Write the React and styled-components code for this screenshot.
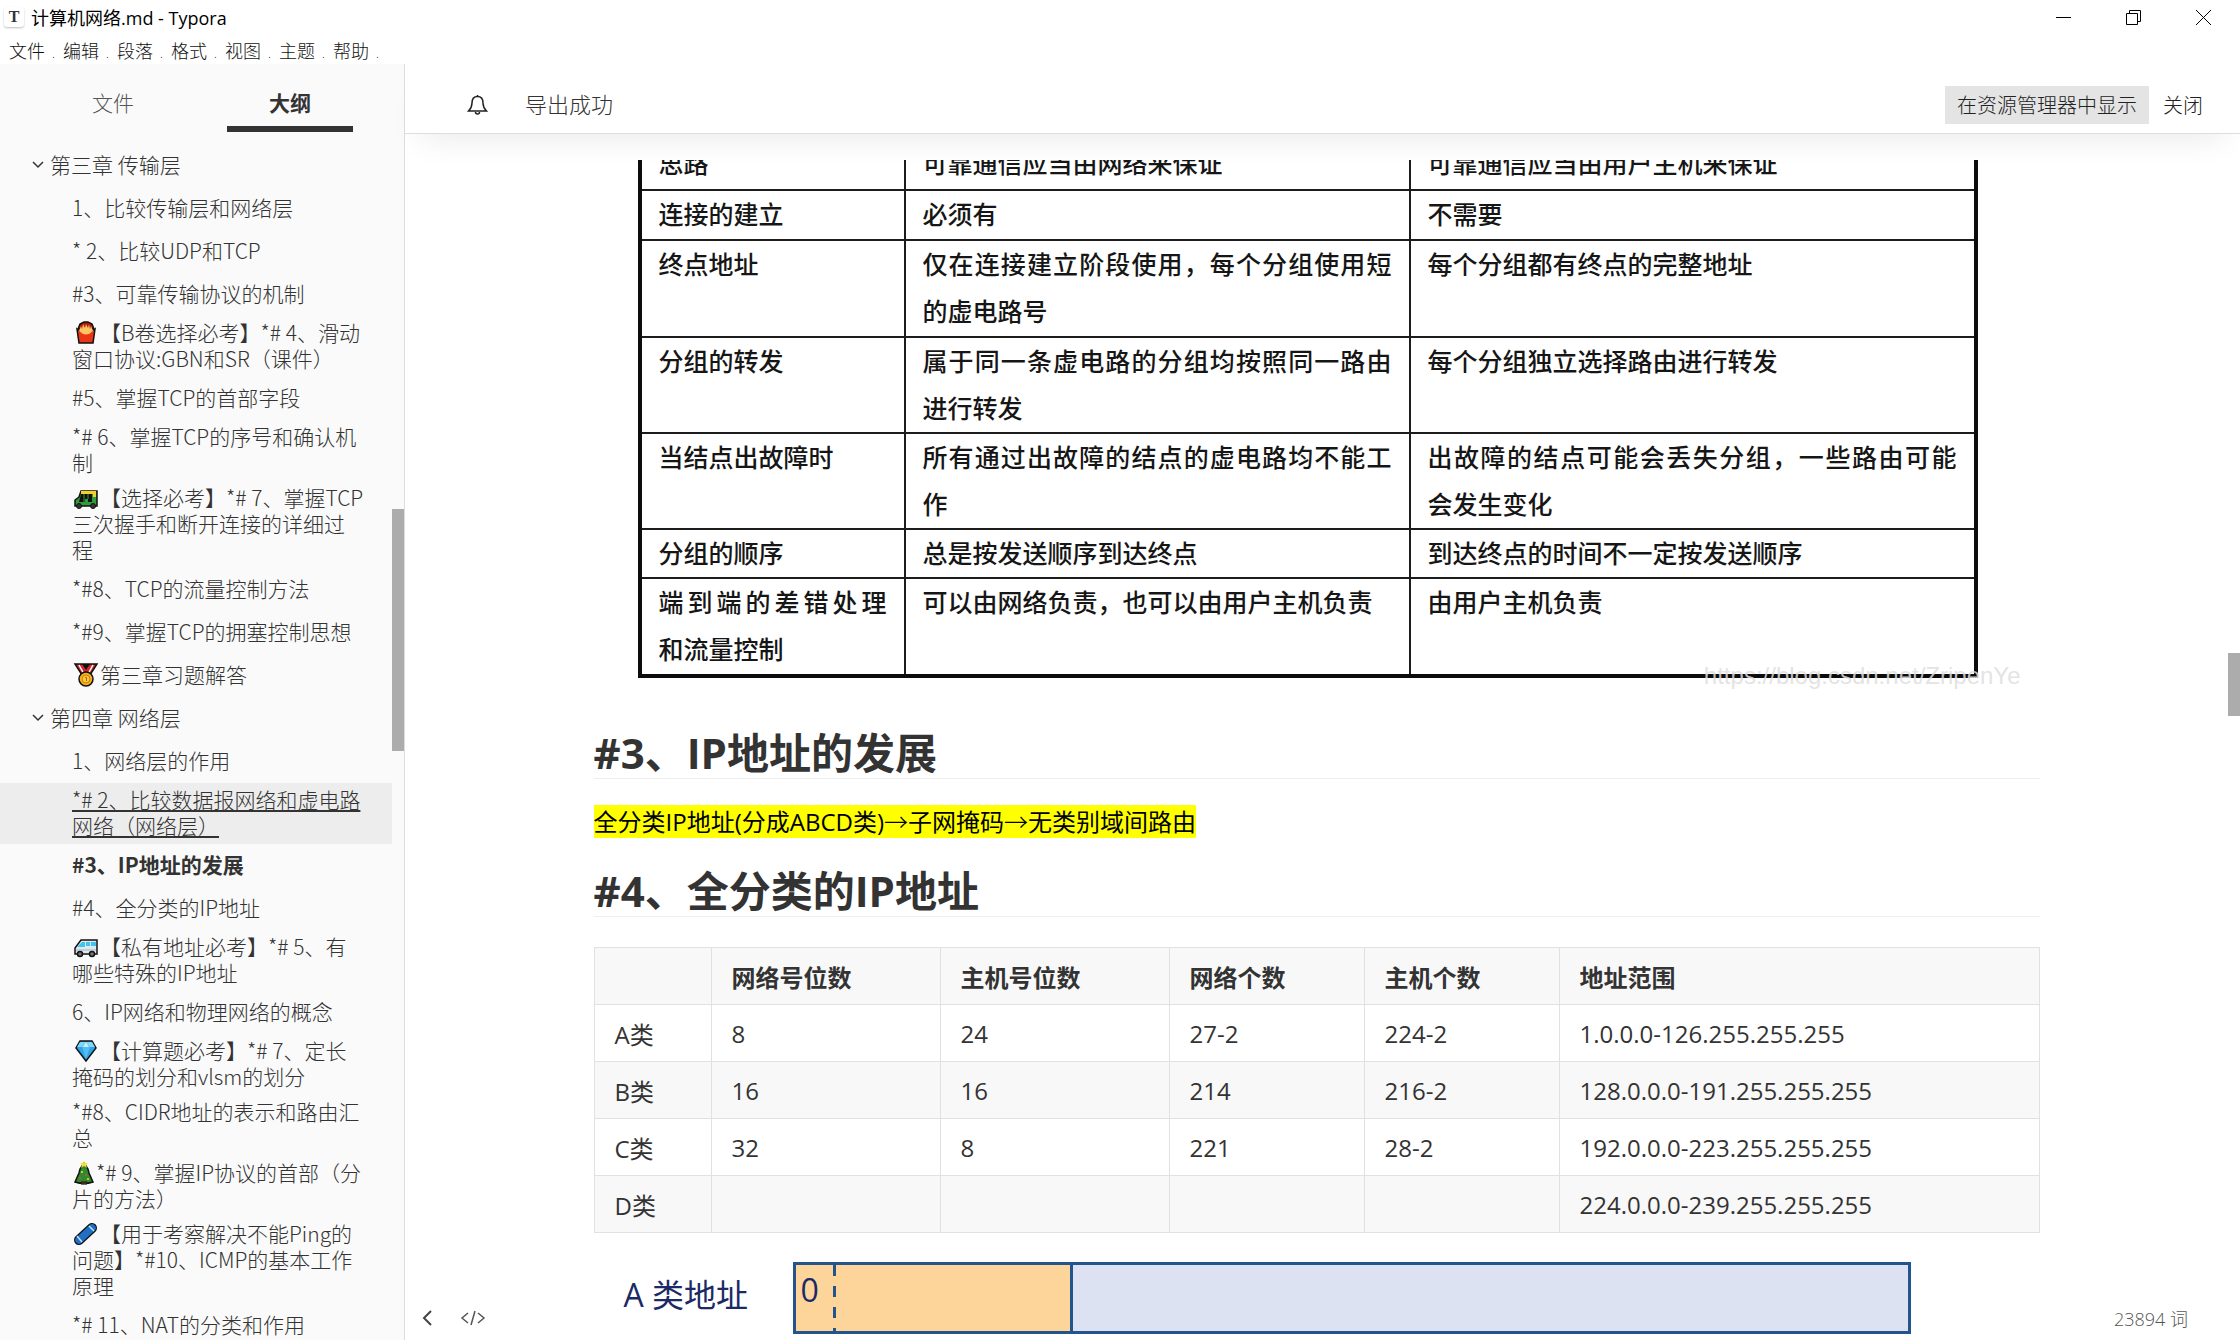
import React from "react";
import styled, { createGlobalStyle } from "styled-components";

const GlobalStyle = createGlobalStyle`
  * {
    box-sizing: border-box;
  }

  body {
    margin: 0;
    background: #ffffff;
    color: #333333;
    font-family: "Open Sans", "Noto Sans CJK SC", sans-serif;
  }

  button {
    border: none;
    background: none;
    padding: 0;
    color: inherit;
    font: inherit;
    cursor: pointer;
  }
`;

const Window = styled.div`
  height: 100vh;
  display: flex;
  flex-direction: column;
  overflow: hidden;
`;

const TitleBar = styled.header`
  height: 34px;
  flex-shrink: 0;
  display: flex;
  align-items: center;
  padding: 0 2px 0 4px;
  color: #000000;
  font-size: 18px;
`;

const AppIcon = styled.span`
  width: 20px;
  height: 20px;
  margin-right: 7px;
  border-radius: 3px;
  box-shadow: 0 1px 2px rgba(0, 0, 0, 0.25);
  color: #333333;
  font-family: "Liberation Serif", serif;
  font-size: 16px;
  font-weight: 700;
  line-height: 20px;
  text-align: center;
`;

const WindowTitle = styled.h1`
  flex: 1;
  margin: 0;
  font-size: 18px;
  font-weight: 400;
`;

const WindowButton = styled.button`
  width: 70px;
  height: 32px;
  display: flex;
  align-items: center;
  justify-content: center;
`;

const MenuBar = styled.nav`
  height: 30px;
  flex-shrink: 0;
  display: flex;
  align-items: center;
  padding: 4px 0 0 9px;
  font-size: 18px;
  font-weight: 300;
`;

const MenuItem = styled.button`
  width: 54px;
  height: 26px;
  line-height: 26px;
  text-align: left;
  color: #111111;

  span {
    padding-left: 7px;
    font-size: 12px;
  }
`;

const Body = styled.div`
  flex: 1;
  min-height: 0;
  display: flex;
`;

const Sidebar = styled.aside`
  width: 405px;
  flex-shrink: 0;
  display: flex;
  flex-direction: column;
  background: #fafafa;
  border-right: 1px solid #dddddd;
`;

const Tabs = styled.div`
  height: 80px;
  flex-shrink: 0;
  display: flex;
  justify-content: space-between;
  align-items: flex-start;
  padding: 10px 51px 0 50px;
`;

const Tab = styled.button`
  width: 126px;
  height: 58px;
  padding-top: 3px;
  font-size: 21px;
  font-weight: ${(props) => (props.$active ? 700 : 300)};
  color: ${(props) => (props.$active ? "#333333" : "#555555")};
  border-bottom: 6px solid ${(props) => (props.$active ? "#333333" : "transparent")};
`;

const Outline = styled.div`
  flex: 1;
  min-height: 0;
  display: flex;
`;

const OutlineList = styled.nav`
  flex: 1;
  overflow: hidden;
  font-family: "Noto Sans CJK SC", sans-serif;
`;

const OutlineLink = styled.a`
  min-height: 43px;
  display: flex;
  align-items: center;
  padding: 3px 0 6px ${(props) => (props.$chapter ? "31px" : "72px")};
  background: ${(props) => (props.$selected ? "#ededed" : "transparent")};
  color: #333333;
  font-size: 21px;
  font-weight: ${(props) => (props.$current ? 700 : 300)};
  line-height: 26px;
  white-space: pre;
  text-decoration: ${(props) => (props.$selected ? "underline 2px" : "none")};
  text-underline-offset: 2px;
`;

const Chevron = styled.svg`
  width: 14px;
  height: 14px;
  margin-right: 5px;
`;

const EmojiIcon = styled.svg`
  width: ${(props) => (props.$narrow ? "24px" : "28px")};
  height: 24px;
  overflow: visible;
  vertical-align: -3px;
`;

const Track = styled.div`
  width: 12px;
  flex-shrink: 0;
`;

const Thumb = styled.div`
  height: ${(props) => props.$size}px;
  margin-top: ${(props) => props.$start}px;
  background: #acacac;
`;

const Main = styled.main`
  flex: 1;
  min-width: 0;
  position: relative;
  display: flex;
  flex-direction: column;
`;

const Notice = styled.div`
  height: 70px;
  flex-shrink: 0;
  display: flex;
  align-items: center;
  gap: 2px;
  padding: 12px 25px 0 62px;
  border-bottom: 1px solid #dddddd;
  box-shadow: 0 20px 32px -16px rgba(0, 0, 0, 0.09);
`;

const NoticeText = styled.span`
  flex: 1;
  padding: 0 0 4px 35px;
  font-size: 22px;
  font-weight: 300;
`;

const NoticeButton = styled.button`
  height: 38px;
  padding: 0 12px;
  background: ${(props) => (props.$filled ? "#e4e4e4" : "transparent")};
  font-size: 20px;
  font-weight: 300;
  color: #222222;
`;

const Scroller = styled.div`
  flex: 1;
  min-height: 0;
  display: flex;
  padding-top: 26px;
`;

const Page = styled.div`
  flex: 1;
  min-width: 0;
  overflow: hidden;
`;

const Article = styled.article`
  max-width: 1446px;
  margin: 0 auto;
  font-size: 24px;
`;

const Scan = styled.figure`
  position: relative;
  margin: -20px 62px 0 44px;
`;

const ScanTable = styled.table`
  width: 100%;
  table-layout: fixed;
  border-collapse: collapse;
  border: 4px solid #0c0c0c;
  border-top: none;
  color: #161616;
  font-size: 25px;
  font-weight: 500;
  line-height: 47px;

  td {
    padding: 0 17px;
    border: 2px solid #1c1c1c;
    border-top: none;
    vertical-align: top;
  }
`;

const ScanRow = styled.tr`
  height: ${(props) => props.$height}px;
`;

const ScanLine = styled.span`
  display: block;
  white-space: nowrap;
  text-align-last: ${(props) => (props.$spread ? "justify" : "left")};
`;

const Watermark = styled.figcaption`
  position: absolute;
  right: -43px;
  bottom: -12px;
  color: rgba(222, 222, 222, 0.85);
  font-family: "Liberation Sans", sans-serif;
  font-size: 24px;
  line-height: 28px;
`;

const Heading = styled.h2`
  margin: 0;
  border-bottom: 1px solid #eeeeee;
  font-size: 42px;
  font-weight: 700;
  line-height: 51px;
`;

const Paragraph = styled.p`
  margin: 24px 0;
  line-height: 38px;
`;

const Section = styled.section`
  padding-top: ${(props) => (props.$first ? "49px" : "0")};
`;

const Mark = styled.mark`
  background: #ffff00;
  color: #000000;
`;

const Arrow = styled.span`
  font-family: "Noto Sans CJK SC", sans-serif;
  font-weight: 300;
  line-height: 24px;
`;

const DataTable = styled.table`
  width: 100%;
  margin-top: 30px;
  table-layout: fixed;
  border-collapse: collapse;
  text-align: left;

  th,
  td {
    height: 57px;
    padding: 0 20px;
    border: 1px solid #dfe2e5;
  }

  tr {
    background: #ffffff;
  }

  thead tr,
  tbody tr:nth-child(2n) {
    background: #f8f8f8;
  }
`;

const Diagram = styled.div`
  display: flex;
  align-items: center;
  margin-top: 29px;
  padding: 0 129px 0 30px;
`;

const DiagramLabel = styled.span`
  width: 169px;
  padding-bottom: 6px;
  color: #1b2a66;
  font-size: 32px;
  line-height: 40px;
`;

const Bar = styled.div`
  flex: 1;
  height: 72px;
  display: flex;
  border: 3px solid #24548c;
  background: #dce2f2;
`;

const NetPart = styled.div`
  width: 277px;
  display: flex;
  background: #fdd59b;
  border-right: 3px solid #24548c;
`;

const FirstBit = styled.span`
  width: 40px;
  padding-left: 5px;
  background: repeating-linear-gradient(#24548c 0 11px, transparent 11px 21px) right / 3px 100% no-repeat;
  color: #1b2a66;
  font-size: 32px;
  line-height: 50px;
`;

const Footer = styled.footer`
  position: absolute;
  left: 13px;
  right: 52px;
  bottom: 6px;
  height: 32px;
  display: flex;
  align-items: center;
  gap: 22px;
  color: #555555;
`;

const FooterButton = styled.button`
  height: 32px;
  display: flex;
  align-items: center;
`;

const WordCount = styled.span`
  margin-left: auto;
  font-size: 18px;
  font-weight: 300;
`;

const emojiArt = {
  fries: (
    <>
      <path d="M6 8 8 3l4-2h4l4 2 2 5z" fill="#b3150c" stroke="#111" strokeWidth="1.5" />
      <path d="M5 8q9 7 18 0l-2 14H7z" fill="#ea3517" stroke="#111" strokeWidth="1.5" />
      <path d="M7 10 9 5l1 3 1-5 2 4 1-4 2 4 1-4 1 5 1-3 2 5q-7 7-14 0z" fill="#fcc560" />
    </>
  ),
  rickshaw: (
    <>
      <path d="M3 20v-6l4-3 2-6h16v15z" fill="#2f9b3a" stroke="#111" strokeWidth="1.5" />
      <path d="M9 5h15v6h-3V8H9z" fill="#f5cf25" />
      <path d="M9 8h11v8h-4v-3h-3v3H7z" fill="#111" />
      <path d="M12 8v8M16 8v5" stroke="#2f9b3a" />
      <circle cx="7" cy="20" r="2.5" fill="#333" stroke="#111" />
      <circle cx="21" cy="20" r="2.5" fill="#333" stroke="#111" />
    </>
  ),
  medal: (
    <>
      <path d="M3 1h22l-7 11h-8z" fill="#d22630" stroke="#111" strokeWidth="1.5" />
      <path d="M10 1h8l-4 6z" fill="#111" />
      <path d="m7 2 5 9M21 2l-5 9" stroke="#fff" strokeWidth="1.5" />
      <circle cx="14" cy="16" r="7" fill="#f6b21b" stroke="#111" strokeWidth="1.5" />
      <circle cx="14" cy="16" r="4" fill="#fcc83c" stroke="#c67f0c" />
      <path d="M13 14.500h1.500V18" stroke="#a8690a" fill="none" />
    </>
  ),
  van: (
    <>
      <path d="M3 19v-6l6-8h16v14z" fill="#dfe8ec" stroke="#111" strokeWidth="1.5" />
      <path d="m5 12 5-5h3v5zM14 7h4v4h-4zM19 7h5v4h-5z" fill="#3fc4ee" />
      <path d="M4 15h20" stroke="#a5b4bb" />
      <circle cx="8" cy="19" r="2.500" fill="#777" stroke="#111" strokeWidth="1.5" />
      <circle cx="20" cy="19" r="2.500" fill="#777" stroke="#111" strokeWidth="1.5" />
    </>
  ),
  gem: (
    <>
      <path d="M8 2h12l4 7-10 13L4 9z" fill="#2aa5e8" stroke="#111" strokeWidth="1.5" />
      <path d="M8 3h12l3 5H5z" fill="#7fd6f8" />
      <path d="m10 8 4-5 4 5-4 12z" fill="#56bdf2" />
      <path d="m11 8 3-5 3 5z" fill="#c9f0fd" />
    </>
  ),
  tree: (
    <>
      <path d="m12 2 4 6 1 4 4 9q-9 3-18 0l4-9 1-4z" fill="#2f8a2f" stroke="#111" strokeWidth="1.5" />
      <path d="M9 21h6v2H9z" fill="#7b4a21" stroke="#111" />
      <path d="m12 0 1 2h3l-2 2 1 3-3-2-3 2 1-3-2-2h3z" fill="#f5df35" />
      <circle cx="10" cy="11" r="1" fill="#f5df35" />
      <circle cx="14" cy="14" r="1" fill="#e5482e" />
      <circle cx="8" cy="17" r="1" fill="#e5482e" />
      <circle cx="16" cy="18" r="1" fill="#f5df35" />
    </>
  ),
  board: (
    <>
      <path d="m7 18 13-12" stroke="#111" strokeWidth="10" strokeLinecap="round" />
      <path d="m7 18 13-12" stroke="#1f6fc4" strokeWidth="7.500" strokeLinecap="round" />
      <path d="m5 14 5 6M17 4l5 5" stroke="#bfe0f8" strokeWidth="1.5" />
    </>
  ),
};

function Emoji({ name }) {
  const narrow = name === "tree";
  return (
    <EmojiIcon $narrow={narrow} viewBox={narrow ? "0 -1 24 24" : "0 -1 28 24"} fill="none" aria-hidden="true">
      {emojiArt[name]}
    </EmojiIcon>
  );
}

const menus = ["文件", "编辑", "段落", "格式", "视图", "主题", "帮助"];

const outline = [
  { text: "第三章 传输层", chapter: true },
  { text: "1、比较传输层和网络层" },
  { text: "* 2、比较UDP和TCP" },
  { text: "#3、可靠传输协议的机制" },
  { emoji: "fries", text: "【B卷选择必考】*# 4、滑动\n窗口协议:GBN和SR（课件）" },
  { text: "#5、掌握TCP的首部字段" },
  { text: "*# 6、掌握TCP的序号和确认机\n制" },
  { emoji: "rickshaw", text: "【选择必考】*# 7、掌握TCP\n三次握手和断开连接的详细过\n程" },
  { text: "*#8、TCP的流量控制方法" },
  { text: "*#9、掌握TCP的拥塞控制思想" },
  { emoji: "medal", text: "第三章习题解答" },
  { text: "第四章 网络层", chapter: true },
  { text: "1、网络层的作用" },
  { text: "*# 2、比较数据报网络和虚电路\n网络（网络层）", selected: true },
  { text: "#3、IP地址的发展", current: true },
  { text: "#4、全分类的IP地址" },
  { emoji: "van", text: "【私有地址必考】*# 5、有\n哪些特殊的IP地址" },
  { text: "6、IP网络和物理网络的概念" },
  { emoji: "gem", text: "【计算题必考】*# 7、定长\n掩码的划分和vlsm的划分" },
  { text: "*#8、CIDR地址的表示和路由汇\n总" },
  { emoji: "tree", text: "*# 9、掌握IP协议的首部（分\n片的方法）" },
  { emoji: "board", text: "【用于考察解决不能Ping的\n问题】*#10、ICMP的基本工作\n原理" },
  { text: "*# 11、NAT的分类和作用" },
];

// a trailing "|" marks a line that is set to the full width of its cell
const scanRows = [
  { height: 50, cells: [["思路"], ["可靠通信应当由网络来保证"], ["可靠通信应当由用户主机来保证"]] },
  { height: 50, cells: [["连接的建立"], ["必须有"], ["不需要"]] },
  { height: 97, cells: [["终点地址"], ["仅在连接建立阶段使用，每个分组使用短|", "的虚电路号"], ["每个分组都有终点的完整地址"]] },
  { height: 96, cells: [["分组的转发"], ["属于同一条虚电路的分组均按照同一路由|", "进行转发"], ["每个分组独立选择路由进行转发"]] },
  { height: 96, cells: [["当结点出故障时"], ["所有通过出故障的结点的虚电路均不能工|", "作"], ["出故障的结点可能会丢失分组，一些路由可能|", "会发生变化"]] },
  { height: 49, cells: [["分组的顺序"], ["总是按发送顺序到达终点"], ["到达终点的时间不一定按发送顺序"]] },
  { height: 98, cells: [["端到端的差错处理|", "和流量控制"], ["可以由网络负责，也可以由用户主机负责"], ["由用户主机负责"]] },
];

const classHeads = ["", "网络号位数", "主机号位数", "网络个数", "主机个数", "地址范围"];

const classRows = [
  ["A类", "8", "24", "27-2", "224-2", "1.0.0.0-126.255.255.255"],
  ["B类", "16", "16", "214", "216-2", "128.0.0.0-191.255.255.255"],
  ["C类", "32", "8", "221", "28-2", "192.0.0.0-223.255.255.255"],
  ["D类", "", "", "", "", "224.0.0.0-239.255.255.255"],
];

function App() {
  return (
    <Window>
      <GlobalStyle />
      <TitleBar>
        <AppIcon>T</AppIcon>
        <WindowTitle>计算机网络.md - Typora</WindowTitle>
        <WindowButton aria-label="最小化">
          <svg width="15" height="15" fill="none" stroke="#000">
            <path d="M0 7.500h15" />
          </svg>
        </WindowButton>
        <WindowButton aria-label="还原">
          <svg width="15" height="15" fill="none" stroke="#000">
            <path d="M.5 3.500h11v11H.500zM3.500 3.500v-3h11v11h-3" />
          </svg>
        </WindowButton>
        <WindowButton aria-label="关闭窗口">
          <svg width="15" height="15" fill="none" stroke="#000">
            <path d="m0 0 15 15M15 0 0 15" />
          </svg>
        </WindowButton>
      </TitleBar>

      <MenuBar>
        {menus.map((menu) => (
          <MenuItem key={menu}>
            {menu}
            <span>.</span>
          </MenuItem>
        ))}
      </MenuBar>

      <Body>
        <Sidebar>
          <Tabs>
            <Tab>文件</Tab>
            <Tab $active>大纲</Tab>
          </Tabs>
          <Outline>
            <OutlineList>
              {outline.map((item) => (
                <OutlineLink
                  key={item.text}
                  href="#"
                  $chapter={item.chapter}
                  $selected={item.selected}
                  $current={item.current}
                >
                  {item.chapter && (
                    <Chevron viewBox="0 0 14 14" fill="none" stroke="#333" strokeWidth="1.5">
                      <path d="m2 5 5 5 5-5" />
                    </Chevron>
                  )}
                  <span>
                    {item.emoji && <Emoji name={item.emoji} />}
                    {item.text}
                  </span>
                </OutlineLink>
              ))}
            </OutlineList>
            <Track>
              <Thumb $start={365} $size={242} />
            </Track>
          </Outline>
        </Sidebar>

        <Main>
          <Notice>
            <svg width="21" height="22" viewBox="0 0 21 22" fill="none" stroke="#222" strokeWidth="1.5">
              <path d="M10.500 2.500c-4 0-5.500 3-5.500 6.500 0 4-1.500 6-3.500 8h18c-2-2-3.500-4-3.500-8 0-3.500-1.500-6.500-5.500-6.500z" />
              <path d="M10.500 2.500V1M8.500 18q0 2 2 2t2-2" />
            </svg>
            <NoticeText>导出成功</NoticeText>
            <NoticeButton $filled>在资源管理器中显示</NoticeButton>
            <NoticeButton>关闭</NoticeButton>
          </Notice>

          <Scroller>
            <Page>
              <Article>
                <Scan>
                  <ScanTable>
                    <colgroup>
                      <col width="265" />
                      <col width="505" />
                      <col />
                    </colgroup>
                    <tbody>
                      {scanRows.map((row) => (
                        <ScanRow key={row.cells[0][0]} $height={row.height}>
                          {row.cells.map((lines) => (
                            <td key={lines[0]}>
                              {lines.map((line) => (
                                <ScanLine key={line} $spread={line.endsWith("|")}>
                                  {line.replace("|", "")}
                                </ScanLine>
                              ))}
                            </td>
                          ))}
                        </ScanRow>
                      ))}
                    </tbody>
                  </ScanTable>
                  <Watermark>https://blog.csdn.net/ZripenYe</Watermark>
                </Scan>

                <Section $first>
                  <Heading>#3、IP地址的发展</Heading>
                  <Paragraph>
                    <Mark>
                      全分类IP地址(分成ABCD类)<Arrow>→</Arrow>子网掩码<Arrow>→</Arrow>无类别域间路由
                    </Mark>
                  </Paragraph>
                </Section>

                <Section>
                  <Heading>#4、全分类的IP地址</Heading>
                  <DataTable>
                    <colgroup>
                      <col width="117" />
                      <col width="229" />
                      <col width="229" />
                      <col width="195" />
                      <col width="195" />
                      <col />
                    </colgroup>
                    <thead>
                      <tr>
                        {classHeads.map((head) => (
                          <th key={head}>{head}</th>
                        ))}
                      </tr>
                    </thead>
                    <tbody>
                      {classRows.map((row) => (
                        <tr key={row[0]}>
                          {row.map((cell, i) => (
                            <td key={i}>{cell}</td>
                          ))}
                        </tr>
                      ))}
                    </tbody>
                  </DataTable>
                  <Diagram>
                    <DiagramLabel>A 类地址</DiagramLabel>
                    <Bar>
                      <NetPart>
                        <FirstBit>0</FirstBit>
                      </NetPart>
                    </Bar>
                  </Diagram>
                </Section>
              </Article>
            </Page>
            <Track>
              <Thumb $start={493} $size={63} />
            </Track>
          </Scroller>

          <Footer>
            <FooterButton aria-label="收起侧边栏">
              <svg width="20" height="20" viewBox="0 0 20 20" fill="none" stroke="#444" strokeWidth="2">
                <path d="m13 3-7 7 7 7" />
              </svg>
            </FooterButton>
            <FooterButton aria-label="源代码模式">
              <svg width="26" height="20" viewBox="0 0 26 20" fill="none" stroke="#555" strokeWidth="1.5">
                <path d="m8 5-6 5 6 5M18 5l6 5-6 5M15 3l-4 14" />
              </svg>
            </FooterButton>
            <WordCount>23894 词</WordCount>
          </Footer>
        </Main>
      </Body>
    </Window>
  );
}

export default App;
